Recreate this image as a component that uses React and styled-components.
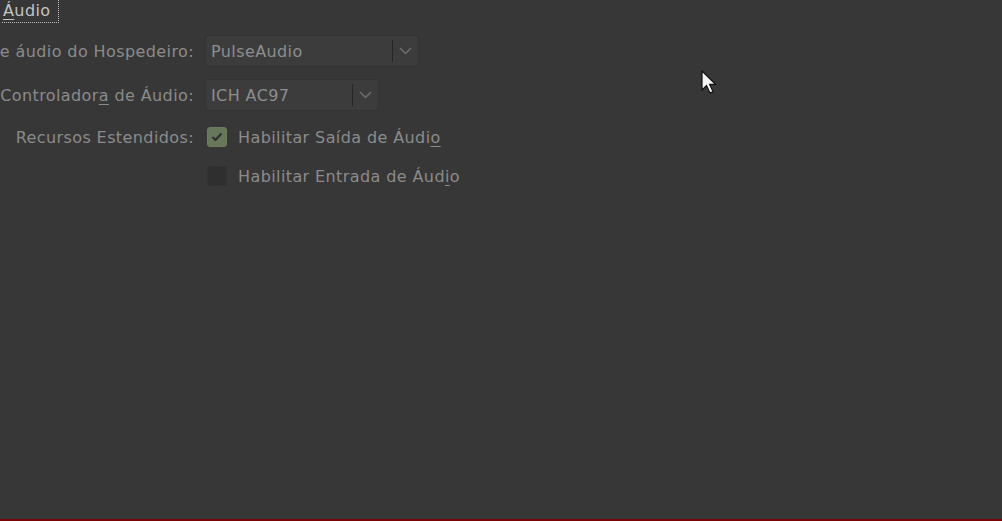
import React from 'react';
import styled, { createGlobalStyle } from 'styled-components';

const GlobalStyle = createGlobalStyle`
  html, body {
    margin: 0;
    padding: 0;
    background: #373737;
  }
  #root {
    height: 521px;
  }
`;

const Page = styled.div`
  position: relative;
  box-sizing: border-box;
  height: 521px;
  width: 1002px;
  overflow: hidden;
  background: #373737;
  border-bottom: 2px solid #7a0505;
  font-family: "DejaVu Sans", "Noto Sans", sans-serif;
  font-size: 16px;
  letter-spacing: 0.4px;
  color: #8b8b8b;
`;

const Heading = styled.div`
  display: inline-block;
  box-sizing: border-box;
  margin-left: 2px;
  padding: 0 7px 0 1px;
  height: 23px;
  line-height: 22px;
  color: #c4c4c4;
  border-right: 1px dotted #bdbdbd;
  border-bottom: 1px dotted #bdbdbd;
`;

const Form = styled.div`
  display: flex;
  flex-direction: column;
  padding-top: 12px;
`;

const Row = styled.div`
  display: flex;
  align-items: center;
  gap: 11px;
  height: ${p => p.$h}px;
  margin-top: ${p => p.$mt || 0}px;
`;

const Label = styled.div`
  flex: 0 0 194px;
  display: flex;
  justify-content: flex-end;
  overflow: hidden;
  white-space: nowrap;
`;

const Field = styled.div`
  display: flex;
  align-items: center;
  white-space: nowrap;
`;

const Combo = styled.div`
  box-sizing: border-box;
  display: flex;
  align-items: center;
  width: ${p => p.$w}px;
  height: 32px;
  border: 1px solid #333;
  border-radius: 3px;
  background: #3c3c3c;
  color: #8e8e8e;
  padding-left: 5px;
`;

const ComboText = styled.span`
  flex: 1;
`;

const Sep = styled.span`
  width: 1px;
  height: 22px;
  background: #262626;
  margin-right: 6px;
`;

const Chevron = () => (
  <svg width="13" height="8" viewBox="0 0 13 8" style={{ marginRight: 6 }}>
    <path d="M1 1 L6.5 6.5 L12 1" fill="none" stroke="#6e6e6e" strokeWidth="1.5" />
  </svg>
);

const Check = styled.span`
  box-sizing: border-box;
  display: inline-flex;
  align-items: center;
  justify-content: center;
  width: 20px;
  height: 20px;
  margin-left: 2px;
  margin-right: 11px;
  border-radius: 3px;
  background: ${p => (p.$on ? '#67775a' : '#2f2f2f')};
  border: 1px solid ${p => (p.$on ? '#6d7d60' : '#333')};
`;

const Mn = styled.span`
  text-decoration: underline;
  text-underline-offset: 3px;
`;

const Cursor = styled.svg`
  position: absolute;
  left: 700px;
  top: 70px;
`;

const App = () => (
  <Page>
    <GlobalStyle />
    <Heading><Mn>Á</Mn>udio</Heading>
    <Form>
      <Row $h={32}>
        <Label>Driver de áudio do Hospedeiro:</Label>
        <Combo $w={214}>
          <ComboText>PulseAudio</ComboText>
          <Sep />
          <Chevron />
        </Combo>
      </Row>
      <Row $h={32} $mt={12}>
        <Label>Controlador<Mn>a</Mn>&nbsp;de Áudio:</Label>
        <Combo $w={174}>
          <ComboText>ICH AC97</ComboText>
          <Sep />
          <Chevron />
        </Combo>
      </Row>
      <Row $h={20} $mt={16}>
        <Label>Recursos Estendidos:</Label>
        <Field>
          <Check $on>
            <svg width="12" height="10" viewBox="0 0 12 10">
              <path d="M1.5 5 L4.5 8 L10.5 1.5" fill="none" stroke="#2e2e2e" strokeWidth="2.2" />
            </svg>
          </Check>
          Habilitar Saída de Áudi<Mn>o</Mn>
        </Field>
      </Row>
      <Row $h={20} $mt={19}>
        <Label />
        <Field>
          <Check />
          Habilitar Entrada de Áud<Mn>i</Mn>o
        </Field>
      </Row>
    </Form>
    <Cursor width="20" height="28" viewBox="0 0 20 28">
      <path d="M2 1 L2 20 L6.5 15.5 L10 23 L13 21.6 L9.6 14.4 L15.5 14.4 Z" fill="#f4f4f4" stroke="#111" strokeWidth="1.2" />
    </Cursor>
  </Page>
);

export default App;
